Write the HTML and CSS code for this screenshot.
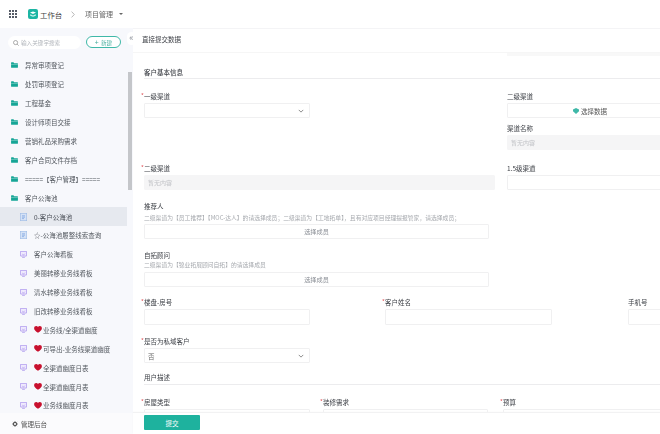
FILE: index.html
```html
<!DOCTYPE html>
<html lang="zh-CN">
<head>
<meta charset="utf-8">
<title>项目管理</title>
<link rel="stylesheet" href="styles.css">
</head>
<body>
<svg class="defs" width="0" height="0" aria-hidden="true">
  <symbol id="folder" viewBox="0 0 8 7"><path d="M0 1a.6.6 0 0 1 .6-.6h2.2l.8 1H7.4a.6.6 0 0 1 .6.6v4a.6.6 0 0 1-.6.6H.6A.6.6 0 0 1 0 6z" fill="#16a596"/><rect x="0" y="2.3" width="8" height=".7" fill="#8fd6cd"/></symbol>
  <symbol id="doc" viewBox="0 0 7 8"><rect x=".3" y=".3" width="6.4" height="7.4" fill="#d5e2f6" stroke="#9dbbe6" stroke-width=".6"/><path d="M2 2.8h3M2 4.2h3M2 5.6h2" stroke="#6f9ade" stroke-width=".6"/></symbol>
  <symbol id="screen" viewBox="0 0 8 8"><rect x=".4" y=".4" width="7.2" height="5.4" rx=".6" fill="#efeafd" stroke="#9478e8" stroke-width=".7"/><path d="M2.6 3.6 4 4.6l1.5-1.5M2.4 7.4h3.2" stroke="#9478e8" stroke-width=".6" fill="none"/></symbol>
  <symbol id="heart" viewBox="0 0 10 9"><path d="M5 8.8C1.8 6.4 0 4.9 0 2.8 0 1.2 1.2 0 2.7 0 3.7 0 4.5.5 5 1.3 5.5.5 6.3 0 7.3 0 8.8 0 10 1.2 10 2.8c0 2.1-1.8 3.6-5 6z" fill="#c8102e"/></symbol>
  <symbol id="chev" viewBox="0 0 8 5"><path d="M1 1l3 3 3-3" fill="none" stroke="#555" stroke-width=".9"/></symbol>
</svg>
<div class="app">
  <header class="topbar">
    <svg class="apps" viewBox="0 0 8 8" aria-hidden="true"><path d="M0 0h2v2H0zM3 0h2v2H3zM6 0h2v2H6zM0 3h2v2H0zM3 3h2v2H3zM6 3h2v2H6zM0 6h2v2H0zM3 6h2v2H3zM6 6h2v2H6z" fill="#555b66"/></svg>
    <svg class="logo" viewBox="0 0 10 10" aria-hidden="true"><rect width="10" height="10" rx="2" fill="#1db5a3"/><path d="M2 3.6 5 2.4l3 1.2-3 1.3z" fill="#fff"/><path d="M2.2 5.2 5 6.4l2.8-1.2v1.5L5 7.8 2.2 6.7z" fill="#c9f0ea"/></svg>
    <span class="brand">工作台</span>
    <svg class="crumb-sep" viewBox="0 0 4 7" aria-hidden="true"><path d="M.6.6 3.3 3.5.6 6.4" fill="none" stroke="#999" stroke-width=".7"/></svg>
    <span class="crumb">项目管理</span>
    <span class="caret"></span>
  </header>
  <div class="body">
    <aside class="side">
      <div class="side-tools">
        <div class="search">
          <svg class="search-ic" viewBox="0 0 7 7" aria-hidden="true"><circle cx="3" cy="3" r="2.4" fill="none" stroke="#777" stroke-width=".7"/><path d="M4.8 4.8 6.6 6.6" stroke="#777" stroke-width=".7"/></svg>
          <span>输入关键字搜索</span>
        </div>
        <button class="new-btn"><span class="plus">+</span> 新建</button>
      </div>
      <div class="side-scroll">
        <ul class="tree">
          <li class="node"><svg class="ic-folder"><use href="#folder"/></svg>异常审项登记</li>
          <li class="node"><svg class="ic-folder"><use href="#folder"/></svg>处罚审项登记</li>
          <li class="node"><svg class="ic-folder"><use href="#folder"/></svg>工程基金</li>
          <li class="node"><svg class="ic-folder"><use href="#folder"/></svg>设计师项目交接</li>
          <li class="node"><svg class="ic-folder"><use href="#folder"/></svg>营销礼品采购需求</li>
          <li class="node"><svg class="ic-folder"><use href="#folder"/></svg>客户合同文件存档</li>
          <li class="node"><svg class="ic-folder"><use href="#folder"/></svg>=====【客户管理】=====</li>
          <li class="node"><svg class="ic-folder"><use href="#folder"/></svg>客户公海池</li>
          <li class="node child active"><svg class="ic-doc"><use href="#doc"/></svg>0-客户公海池</li>
          <li class="node child"><svg class="ic-doc"><use href="#doc"/></svg>☆-公海池履整线索查询</li>
          <li class="node child"><svg class="ic-screen"><use href="#screen"/></svg>客户公海看板</li>
          <li class="node child"><svg class="ic-screen"><use href="#screen"/></svg>美丽转移业务线看板</li>
          <li class="node child"><svg class="ic-screen"><use href="#screen"/></svg>清水转移业务线看板</li>
          <li class="node child"><svg class="ic-screen"><use href="#screen"/></svg>旧改转移业务线看板</li>
          <li class="node child"><svg class="ic-screen"><use href="#screen"/></svg><svg class="ic-heart"><use href="#heart"/></svg>业务线/全渠道幽度</li>
          <li class="node child"><svg class="ic-screen"><use href="#screen"/></svg><svg class="ic-heart"><use href="#heart"/></svg>可导出-业务线渠道幽度</li>
          <li class="node child"><svg class="ic-screen"><use href="#screen"/></svg><svg class="ic-heart"><use href="#heart"/></svg>全渠道幽度日表</li>
          <li class="node child"><svg class="ic-screen"><use href="#screen"/></svg><svg class="ic-heart"><use href="#heart"/></svg>全渠道幽度月表</li>
          <li class="node child"><svg class="ic-screen"><use href="#screen"/></svg><svg class="ic-heart"><use href="#heart"/></svg>业务线幽度月表</li>
        </ul>
        <div class="scrollbar"></div>
      </div>
      <div class="side-foot">
        <svg class="gear" viewBox="0 0 8 8" aria-hidden="true"><circle cx="4" cy="4" r="2.1" fill="none" stroke="#444" stroke-width="1.3"/><path d="M4 0v1.4M4 6.6V8M0 4h1.4M6.6 4H8M1.2 1.2l1 1M5.8 5.8l1 1M1.2 6.8l1-1M5.8 2.2l1-1" stroke="#444" stroke-width=".9"/></svg>
        <span>管理后台</span>
      </div>
    </aside>
    <main class="main">
      <div class="collapse">«</div>
      <div class="title-bar">直接提交数据</div>
      <div class="strip"><div class="strip-band"></div></div>
      <div class="scroll">
        <div class="form">
          <h3 class="section first">客户基本信息</h3>

          <div class="row row-channel">
            <div class="field f-166">
              <label class="lbl req">一级渠道</label>
              <div class="ctl select"><svg class="chev"><use href="#chev"/></svg></div>
            </div>
            <div class="col-right">
              <div class="field">
                <label class="lbl">二级渠道</label>
                <div class="ctl center"><svg class="pick" viewBox="0 0 6 6" aria-hidden="true"><path d="M3 0l3 1.6v1.6L3 6 0 3.2V1.6z" fill="#3fb8a8"/></svg>选择数据</div>
              </div>
              <div class="field stacked">
                <label class="lbl">渠道名称</label>
                <div class="ctl disabled">暂无内容</div>
              </div>
            </div>
          </div>

          <div class="row row-second">
            <div class="field f-351">
              <label class="lbl req">二级渠道</label>
              <div class="ctl disabled">暂无内容</div>
            </div>
            <div class="field f-right">
              <label class="lbl">1.5级渠道</label>
              <div class="ctl"></div>
            </div>
          </div>

          <div class="field f-345 member first-member">
            <label class="lbl">推荐人</label>
            <p class="help">二级渠道为【员工推荐】【MOC-达人】的请选择成员；二级渠道为【工地拓单】，且有对应项目经理提报管家，请选择成员；</p>
            <div class="ctl center muted">选择成员</div>
          </div>

          <div class="field f-345 member second-member">
            <label class="lbl">自拓顾问</label>
            <p class="help">二级渠道为【锦业拓展顾问自拓】的请选择成员</p>
            <div class="ctl center muted">选择成员</div>
          </div>

          <div class="row row-three">
            <div class="field f-166"><label class="lbl req">楼盘-房号</label><div class="ctl tall"></div></div>
            <div class="field f-167"><label class="lbl req">客户姓名</label><div class="ctl tall"></div></div>
            <div class="field f-rest"><label class="lbl">手机号</label><div class="ctl tall"></div></div>
          </div>

          <div class="field f-166 private">
            <label class="lbl req">是否为私域客户</label>
            <div class="ctl select value">否<svg class="chev"><use href="#chev"/></svg></div>
          </div>

          <h3 class="section desc">用户描述</h3>

          <div class="row row-last">
            <div class="field f-166"><label class="lbl req">房屋类型</label><div class="ctl tall"></div></div>
            <div class="field f-165"><label class="lbl req">装修需求</label><div class="ctl tall"></div></div>
            <div class="field f-rest"><label class="lbl req">预算</label><div class="ctl tall"></div></div>
          </div>
        </div>
      </div>
      <div class="foot"><button class="submit">提交</button></div>
    </main>
  </div>
</div>
</body>
</html>
```
FILE: styles.css
```css
* { box-sizing: border-box; }
html, body { margin: 0; height: 100%; overflow: hidden; background: #fff; }
body { font-family: "Noto Sans CJK SC", "Noto Sans", sans-serif; font-size: 6.5px; color: #4a4f57; }
.defs { position: absolute; }
.app { width: 660px; height: 434px; display: flex; flex-direction: column; overflow: hidden; filter: blur(.45px); }

.topbar { height: 28px; flex: none; display: flex; align-items: center; padding: 0 0 0 9px; font-size: 7.2px; color: #555; background: #fff; }
.apps { width: 8px; height: 8px; margin-right: 6px; }
.logo { width: 10px; height: 10px; margin-left: 5px; margin-right: 2px; }
.brand { color: #444; width: 22px; white-space: nowrap; font-size: 7.4px; }
.crumb-sep { width: 4px; height: 7px; margin-left: 9px; }
.crumb { margin-left: 10px; white-space: nowrap; font-size: 7px; color: #666; }
.caret { width: 0; height: 0; margin-left: 6px; border: 2px solid transparent; border-top: 2.4px solid #666; border-bottom: 0; }

.body { flex: 1; display: flex; min-height: 0; }
.side { width: 133px; flex: none; display: flex; flex-direction: column; background: #f7f8fc; }
.side-tools { height: 27px; flex: none; display: flex; align-items: flex-start; padding: 8px 0 0 8px; }
.search { width: 73px; height: 13px; border-radius: 7px; background: #fff; display: flex; align-items: center; padding-left: 5px; color: #b0b4ba; font-size: 5.6px; white-space: nowrap; }
.search-ic { width: 6px; height: 6px; margin-right: 2px; flex: none; }
.new-btn { margin: 0 0 0 5px; width: 35px; height: 12px; padding: 0; border: 1px solid #3fb8a8; border-radius: 6px; background: #fff; color: #46ad9f; font: inherit; font-size: 5.6px; line-height: 10px; }
.plus { font-size: 7px; margin-right: 1px; }

.side-scroll { flex: 1; min-height: 0; position: relative; overflow: hidden; }
.tree { list-style: none; margin: 1px 0 0; padding: 0; width: 127px; }
.node { height: 18.9px; display: flex; align-items: center; padding-left: 11px; white-space: nowrap; color: #53585f; font-size: 6.5px; }
.node.child { padding-left: 20px; }
.node.active { background: #e6e9ef; color: #4a4f57; }
.ic-folder { width: 7px; height: 6px; margin-right: 7px; flex: none; }
.ic-doc { width: 7px; height: 8px; margin-right: 7px; flex: none; }
.ic-screen { width: 7px; height: 7px; margin-right: 7px; flex: none; }
.ic-heart { width: 8px; height: 7px; margin-right: 1px; flex: none; }
.scrollbar { position: absolute; left: 128px; top: 17px; width: 4px; height: 118px; background: #c4c6ca; }
.side-foot { height: 21px; flex: none; display: flex; align-items: center; padding-left: 12px; background: #fbfbfd; color: #555; font-size: 6.5px; }
.gear { width: 6px; height: 6px; margin-right: 3px; }

.main { flex: 1; min-width: 0; display: flex; flex-direction: column; position: relative; border-top: 1px solid #f4f4f6; }
.collapse { position: absolute; left: -6px; top: 3px; width: 9px; height: 13px; border-radius: 6px; background: #fff; color: #8a8f98; font-size: 9px; line-height: 11px; text-align: center; }
.title-bar { height: 23px; flex: none; padding: 0 0 4px 9px; display: flex; align-items: center; font-size: 6.5px; color: #3f4248; }
.strip { height: 4px; flex: none; background: #fff; border-top: 1px solid #f6f6f6; }
.strip-band { margin-left: 374px; height: 3px; background: #f8f8f8; }
.scroll { flex: 1; min-height: 0; overflow: hidden; }
.form { padding-left: 11px; width: 700px; }

.section { margin: 0; font-size: 6.5px; font-weight: 500; color: #3f4248; height: 14px; line-height: 12px; border-bottom: 1px solid #ececee; width: 516px; }
.section.first { margin-top: 10px; height: 13px; }
.section.desc { margin-top: 8px; font-weight: 400; }

.row { display: flex; }
.row-channel { margin-top: 11px; height: 72px; }
.row-second { height: 28px; }
.row-three { margin-top: 9px; }
.row-last { margin-top: 11px; }

.field { flex: none; }
.f-166 { width: 166px; }
.f-167 { width: 167px; margin-left: 75px; }
.f-165 { width: 165px; margin-left: 13px; }
.f-345 { width: 345px; }
.f-351 { width: 351px; }
.f-right { width: 166px; margin-left: 12px; }
.f-rest { width: 166px; margin-left: 76px; }
.row-last .f-rest { margin-left: 15px; }
.col-right { margin-left: 197px; width: 166px; flex: none; }
.stacked { margin-top: 4px; }

.lbl { display: block; height: 13px; line-height: 12px; font-size: 6.5px; color: #3f4248; position: relative; white-space: nowrap; }
.req::before { content: "*"; position: absolute; left: -3px; top: 0; color: #e0555a; font-size: 6px; }
.ctl { height: 15px; border: 1px solid #f0f0f1; border-radius: 1px; display: flex; align-items: center; padding: 0 3px; background: #fff; font-size: 6.5px; color: #555; position: relative; }
.ctl.tall { height: 16px; }
.select .chev { width: 6px; height: 4px; position: absolute; right: 5px; top: 5px; }
.center { justify-content: center; }
.muted { color: #8c9097; font-size: 6.2px; }
.pick { width: 6px; height: 6px; margin-right: 2px; }
.disabled { background: #f5f5f6; border-color: #f5f5f6; color: #c0c2c6; font-size: 6px; }
.value { color: #666; }

.help { margin: 0; height: 11px; line-height: 10px; font-size: 5.8px; color: #a6a9ae; white-space: nowrap; }
.first-member { margin-top: 10px; }
.second-member { margin-top: 10px; }
.second-member .lbl { height: 11px; }
.second-member .help { height: 12px; }
.private { margin-top: 10px; }

.foot { height: 21px; flex: none; padding: 2px 0 0 11px; background: #fff; box-shadow: 0 -1px 1px #f2f2f3; position: relative; }
.submit { width: 56px; height: 15px; padding: 0; border: 0; border-radius: 1px; background: #1eb29e; color: #fff; font: inherit; font-size: 6.5px; }
```
